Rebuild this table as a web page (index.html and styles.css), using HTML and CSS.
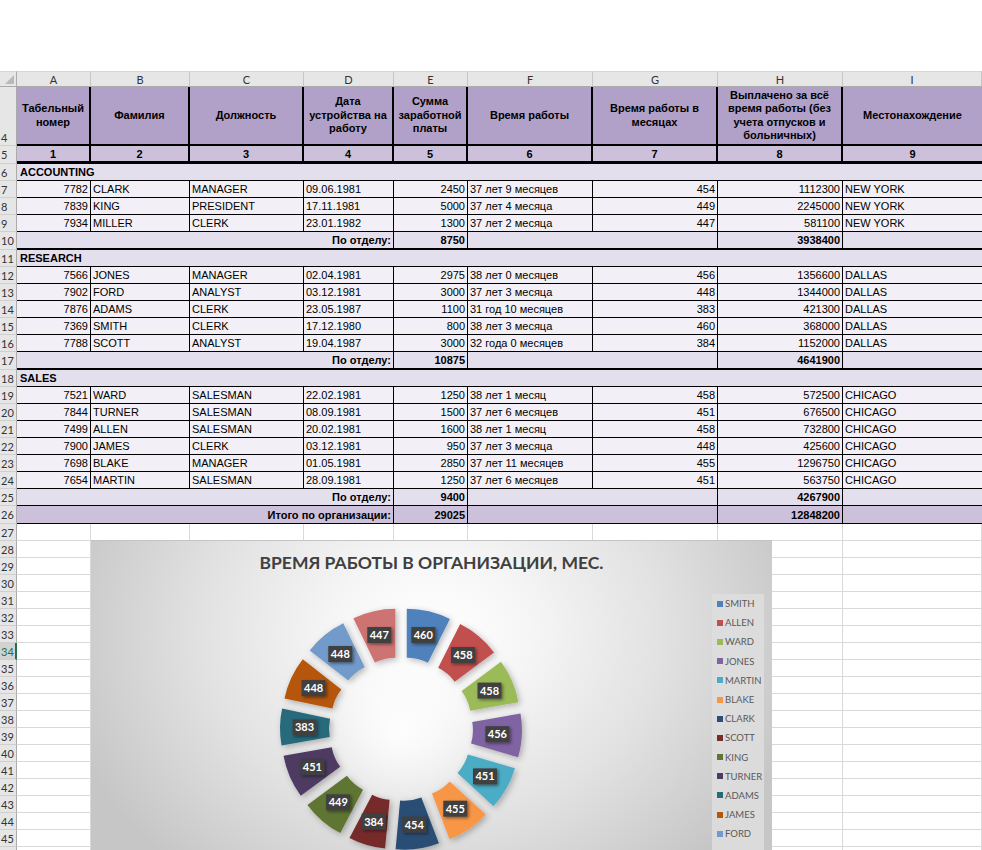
FILE: index.html
```html
<!DOCTYPE html>
<html lang="ru">
<head>
<meta charset="utf-8">
<title>Сотрудники</title>
<link rel="stylesheet" href="styles.css">
</head>
<body>
<div class="sheet">
  <div class="row colhead">
    <div class="corner"></div><div>A</div><div>B</div><div>C</div><div>D</div><div>E</div><div>F</div><div>G</div><div>H</div><div>I</div>
  </div>

  <div class="row r4">
    <div class="rh rb">4</div>
    <div class="th">Табельный<br>номер</div>
    <div class="th">Фамилия</div>
    <div class="th">Должность</div>
    <div class="th">Дата<br>устройства на<br>работу</div>
    <div class="th">Сумма<br>заработной<br>платы</div>
    <div class="th">Время работы</div>
    <div class="th">Время работы в<br>месяцах</div>
    <div class="th">Выплачено за всё<br>время работы (без<br>учета отпусков и<br>больничных)</div>
    <div class="th">Местонахождение</div>
  </div>

  <div class="row r5">
    <div class="rh">5</div>
    <div class="num">1</div><div class="num">2</div><div class="num">3</div><div class="num">4</div><div class="num">5</div><div class="num">6</div><div class="num">7</div><div class="num">8</div><div class="num">9</div>
  </div>

  <div class="row dept"><div class="rh">6</div><div class="dname">ACCOUNTING</div></div>
  <div class="row dr"><div class="rh">7</div><div class="c n">7782</div><div class="c">CLARK</div><div class="c">MANAGER</div><div class="c">09.06.1981</div><div class="c n">2450</div><div class="c">37 лет 9 месяцев</div><div class="c n">454</div><div class="c n">1112300</div><div class="c">NEW YORK</div></div>
  <div class="row dr"><div class="rh">8</div><div class="c n">7839</div><div class="c">KING</div><div class="c">PRESIDENT</div><div class="c">17.11.1981</div><div class="c n">5000</div><div class="c">37 лет 4 месяца</div><div class="c n">449</div><div class="c n">2245000</div><div class="c">NEW YORK</div></div>
  <div class="row dr"><div class="rh">9</div><div class="c n">7934</div><div class="c">MILLER</div><div class="c">CLERK</div><div class="c">23.01.1982</div><div class="c n">1300</div><div class="c">37 лет 2 месяца</div><div class="c n">447</div><div class="c n">581100</div><div class="c">NEW YORK</div></div>
  <div class="row tot thick h18"><div class="rh">10</div><div class="lab">По отделу:</div><div class="v">8750</div><div class="gap"></div><div class="v">3938400</div><div class="end"></div></div>

  <div class="row dept"><div class="rh">11</div><div class="dname">RESEARCH</div></div>
  <div class="row dr"><div class="rh">12</div><div class="c n">7566</div><div class="c">JONES</div><div class="c">MANAGER</div><div class="c">02.04.1981</div><div class="c n">2975</div><div class="c">38 лет 0 месяцев</div><div class="c n">456</div><div class="c n">1356600</div><div class="c">DALLAS</div></div>
  <div class="row dr"><div class="rh">13</div><div class="c n">7902</div><div class="c">FORD</div><div class="c">ANALYST</div><div class="c">03.12.1981</div><div class="c n">3000</div><div class="c">37 лет 3 месяца</div><div class="c n">448</div><div class="c n">1344000</div><div class="c">DALLAS</div></div>
  <div class="row dr"><div class="rh">14</div><div class="c n">7876</div><div class="c">ADAMS</div><div class="c">CLERK</div><div class="c">23.05.1987</div><div class="c n">1100</div><div class="c">31 год 10 месяцев</div><div class="c n">383</div><div class="c n">421300</div><div class="c">DALLAS</div></div>
  <div class="row dr"><div class="rh">15</div><div class="c n">7369</div><div class="c">SMITH</div><div class="c">CLERK</div><div class="c">17.12.1980</div><div class="c n">800</div><div class="c">38 лет 3 месяца</div><div class="c n">460</div><div class="c n">368000</div><div class="c">DALLAS</div></div>
  <div class="row dr"><div class="rh">16</div><div class="c n">7788</div><div class="c">SCOTT</div><div class="c">ANALYST</div><div class="c">19.04.1987</div><div class="c n">3000</div><div class="c">32 года 0 месяцев</div><div class="c n">384</div><div class="c n">1152000</div><div class="c">DALLAS</div></div>
  <div class="row tot thick h18"><div class="rh">17</div><div class="lab">По отделу:</div><div class="v">10875</div><div class="gap"></div><div class="v">4641900</div><div class="end"></div></div>

  <div class="row dept"><div class="rh">18</div><div class="dname">SALES</div></div>
  <div class="row dr"><div class="rh">19</div><div class="c n">7521</div><div class="c">WARD</div><div class="c">SALESMAN</div><div class="c">22.02.1981</div><div class="c n">1250</div><div class="c">38 лет 1 месяц</div><div class="c n">458</div><div class="c n">572500</div><div class="c">CHICAGO</div></div>
  <div class="row dr"><div class="rh">20</div><div class="c n">7844</div><div class="c">TURNER</div><div class="c">SALESMAN</div><div class="c">08.09.1981</div><div class="c n">1500</div><div class="c">37 лет 6 месяцев</div><div class="c n">451</div><div class="c n">676500</div><div class="c">CHICAGO</div></div>
  <div class="row dr"><div class="rh">21</div><div class="c n">7499</div><div class="c">ALLEN</div><div class="c">SALESMAN</div><div class="c">20.02.1981</div><div class="c n">1600</div><div class="c">38 лет 1 месяц</div><div class="c n">458</div><div class="c n">732800</div><div class="c">CHICAGO</div></div>
  <div class="row dr"><div class="rh">22</div><div class="c n">7900</div><div class="c">JAMES</div><div class="c">CLERK</div><div class="c">03.12.1981</div><div class="c n">950</div><div class="c">37 лет 3 месяца</div><div class="c n">448</div><div class="c n">425600</div><div class="c">CHICAGO</div></div>
  <div class="row dr"><div class="rh">23</div><div class="c n">7698</div><div class="c">BLAKE</div><div class="c">MANAGER</div><div class="c">01.05.1981</div><div class="c n">2850</div><div class="c">37 лет 11 месяцев</div><div class="c n">455</div><div class="c n">1296750</div><div class="c">CHICAGO</div></div>
  <div class="row dr"><div class="rh">24</div><div class="c n">7654</div><div class="c">MARTIN</div><div class="c">SALESMAN</div><div class="c">28.09.1981</div><div class="c n">1250</div><div class="c">37 лет 6 месяцев</div><div class="c n">451</div><div class="c n">563750</div><div class="c">CHICAGO</div></div>
  <div class="row tot"><div class="rh">25</div><div class="lab">По отделу:</div><div class="v">9400</div><div class="gap"></div><div class="v">4267900</div><div class="end"></div></div>
  <div class="row tot grand h18"><div class="rh">26</div><div class="lab">Итого по организации:</div><div class="v">29025</div><div class="gap"></div><div class="v">12848200</div><div class="end"></div></div>

  <div class="row blank"><div class="rh">27</div><span></span><span></span><span></span><span></span><span></span><span></span><span></span><span></span><span></span></div>
  <div class="row blank"><div class="rh">28</div><span></span><span></span><span></span><span></span><span></span><span></span><span></span><span></span><span></span></div>
  <div class="row blank"><div class="rh">29</div><span></span><span></span><span></span><span></span><span></span><span></span><span></span><span></span><span></span></div>
  <div class="row blank"><div class="rh">30</div><span></span><span></span><span></span><span></span><span></span><span></span><span></span><span></span><span></span></div>
  <div class="row blank"><div class="rh">31</div><span></span><span></span><span></span><span></span><span></span><span></span><span></span><span></span><span></span></div>
  <div class="row blank"><div class="rh">32</div><span></span><span></span><span></span><span></span><span></span><span></span><span></span><span></span><span></span></div>
  <div class="row blank"><div class="rh">33</div><span></span><span></span><span></span><span></span><span></span><span></span><span></span><span></span><span></span></div>
  <div class="row blank"><div class="rh sel">34</div><span></span><span></span><span></span><span></span><span></span><span></span><span></span><span></span><span></span></div>
  <div class="row blank"><div class="rh">35</div><span></span><span></span><span></span><span></span><span></span><span></span><span></span><span></span><span></span></div>
  <div class="row blank"><div class="rh">36</div><span></span><span></span><span></span><span></span><span></span><span></span><span></span><span></span><span></span></div>
  <div class="row blank"><div class="rh">37</div><span></span><span></span><span></span><span></span><span></span><span></span><span></span><span></span><span></span></div>
  <div class="row blank"><div class="rh">38</div><span></span><span></span><span></span><span></span><span></span><span></span><span></span><span></span><span></span></div>
  <div class="row blank"><div class="rh">39</div><span></span><span></span><span></span><span></span><span></span><span></span><span></span><span></span><span></span></div>
  <div class="row blank"><div class="rh">40</div><span></span><span></span><span></span><span></span><span></span><span></span><span></span><span></span><span></span></div>
  <div class="row blank"><div class="rh">41</div><span></span><span></span><span></span><span></span><span></span><span></span><span></span><span></span><span></span></div>
  <div class="row blank"><div class="rh">42</div><span></span><span></span><span></span><span></span><span></span><span></span><span></span><span></span><span></span></div>
  <div class="row blank"><div class="rh">43</div><span></span><span></span><span></span><span></span><span></span><span></span><span></span><span></span><span></span></div>
  <div class="row blank"><div class="rh">44</div><span></span><span></span><span></span><span></span><span></span><span></span><span></span><span></span><span></span></div>
  <div class="row blank"><div class="rh">45</div><span></span><span></span><span></span><span></span><span></span><span></span><span></span><span></span><span></span></div>
  <div class="row blank"><div class="rh"></div><span></span><span></span><span></span><span></span><span></span><span></span><span></span><span></span><span></span></div>

  <div class="chart">
    <div class="chart-title">ВРЕМЯ РАБОТЫ В ОРГАНИЗАЦИИ, МЕС.</div>
    <svg class="donut" width="681" height="330" viewBox="0 0 681 330">
      <defs>
        <filter id="segshadow" x="-20%" y="-20%" width="140%" height="140%">
          <feDropShadow dx="2" dy="2" stdDeviation="3" flood-color="#000" flood-opacity="0.28"/>
        </filter>
        <filter id="lblshadow" x="-30%" y="-30%" width="160%" height="160%">
          <feDropShadow dx="1.5" dy="1.5" stdDeviation="1.5" flood-color="#000" flood-opacity="0.45"/>
        </filter>
        <radialGradient id="hole" cx="0.5" cy="0.5" r="0.5">
          <stop offset="0" stop-color="#ffffff" stop-opacity="0.9"/>
          <stop offset="1" stop-color="#ffffff" stop-opacity="0"/>
        </radialGradient>
      </defs>
      <circle cx="310" cy="188" r="80" fill="url(#hole)"/>
      <g id="segs" filter="url(#segshadow)"></g>
      <g id="labels"></g>
    </svg>
    <div class="legend">
      <div class="item"><span class="sw k1"></span>SMITH</div>
      <div class="item"><span class="sw k2"></span>ALLEN</div>
      <div class="item"><span class="sw k3"></span>WARD</div>
      <div class="item"><span class="sw k4"></span>JONES</div>
      <div class="item"><span class="sw k5"></span>MARTIN</div>
      <div class="item"><span class="sw k6"></span>BLAKE</div>
      <div class="item"><span class="sw k7"></span>CLARK</div>
      <div class="item"><span class="sw k8"></span>SCOTT</div>
      <div class="item"><span class="sw k9"></span>KING</div>
      <div class="item"><span class="sw k10"></span>TURNER</div>
      <div class="item"><span class="sw k11"></span>ADAMS</div>
      <div class="item"><span class="sw k12"></span>JAMES</div>
      <div class="item"><span class="sw k13"></span>FORD</div>
    </div>
  </div>
</div>
<script src="script.js"></script>
</body>
</html>
```

FILE: styles.css
```css
* { box-sizing: border-box; }
html, body { margin: 0; padding: 0; overflow: hidden; background: #fff; }
body {
  font-family: "Liberation Sans", Arial, sans-serif;
  font-size: 11px;
  color: #000;
}

.sheet { position: relative; margin-top: 71px; width: 982px; }

.row {
  display: grid;
  grid-template-columns: 17px 74px 99px 114px 90px 74px 125px 125px 125px 139px;
  height: 17px;
}
.row > * {
  min-width: 0;
  overflow: hidden;
  white-space: nowrap;
  display: flex;
  align-items: center;
}
.h18 { height: 18px; }

/* column header */
.colhead { height: 16px; }
.colhead > div {
  background: #e6e6e6;
  border-right: 1px solid #c6c6c6;
  border-bottom: 1px solid #ababab;
  border-top: 1px solid #d6d6d6;
  justify-content: center;
  font-family: Lato, "Open Sans", sans-serif;
  font-size: 11px;
  color: #333;
}
.colhead > .corner { position: relative; border-right-color: #ababab; }
.corner::after {
  content: "";
  position: absolute;
  right: 2px;
  bottom: 2px;
  border-style: solid;
  border-width: 0 0 9px 9px;
  border-color: transparent transparent #b9b9b9 transparent;
}

/* row header */
.rh {
  background: #e6e6e6;
  border-right: 1px solid #ababab;
  border-bottom: 1px solid #cfcfcf;
  font-family: Lato, "Open Sans", sans-serif;
  font-size: 11px;
  color: #333;
  padding-left: 1px;
}
.rh.rb { align-items: flex-end; padding-bottom: 1px; }
.rh.sel {
  background: #d2d2d2;
  color: #217346;
  border-right: 2px solid #217346;
}

/* header rows */
.r4 { height: 59px; }
.th {
  background: #b1a0c7;
  border-right: 2px solid #000;
  border-bottom: 2px solid #000;
  justify-content: center;
  text-align: center;
  white-space: normal !important;
  font-weight: bold;
  line-height: 13.4px;
}
.r5 { height: 18px; }
.num {
  background: #ccc0da;
  border-right: 2px solid #000;
  border-bottom: 3px solid #000;
  justify-content: center;
  font-weight: bold;
}
.th:last-child, .num:last-child { border-right: none; }

/* department row */
.dname {
  grid-column: 2 / -1;
  background: #e4dfec;
  border-bottom: 1px solid #000;
  font-weight: bold;
  padding-left: 3px;
}

/* data rows */
.c {
  background: #f2f0f6;
  border-right: 1px solid #000;
  border-bottom: 1px solid #000;
  padding: 0 2px;
}
.c.n { justify-content: flex-end; }
.c:last-child { border-right: none; }

/* totals */
.tot > div:not(.rh) {
  background: #e4dfec;
  border-right: 1px solid #000;
  border-bottom: 1px solid #000;
  font-weight: bold;
  justify-content: flex-end;
  padding: 0 2px;
}
.tot > .lab { grid-column: 2 / 6; }
.tot > .gap { grid-column: 7 / 9; }
.tot > .end { border-right: none !important; }
.tot.thick > div:not(.rh) { border-bottom-width: 2px; }
.tot.grand > div:not(.rh) { background: #ccc0da; }

/* empty grid */
.blank > span {
  background: #fff;
  border-right: 1px solid #d9d9d9;
  border-bottom: 1px solid #d9d9d9;
}

/* chart object floating over the grid */
.chart {
  position: absolute;
  left: 91px;
  top: 469px;
  width: 681px;
  height: 330px;
  border-top: 1px solid #c4c4c4;
  background: radial-gradient(ellipse 56% 95% at 50% 28%, #ffffff 0%, #f6f6f6 25%, #e2e2e2 60%, #c6c6c6 100%);
  overflow: hidden;
}
.chart-title {
  text-align: center;
  font-family: Lato, "Open Sans", sans-serif;
  font-weight: bold;
  font-size: 17.5px;
  line-height: 22px;
  color: #404040;
  padding-top: 11px;
}
.donut { position: absolute; left: 0; top: 0; }
.donut text {
  font-family: Lato, "Open Sans", sans-serif;
  font-weight: bold;
  font-size: 11px;
  fill: #fff;
}

.legend {
  position: absolute;
  left: 621px;
  top: 53px;
  width: 52px;
  height: 290px;
  background: rgba(222, 222, 222, 0.85);
  padding-left: 5px;
}
.item {
  height: 19.2px;
  display: flex;
  align-items: center;
  font-family: Lato, "Open Sans", sans-serif;
  font-size: 9.5px;
  color: #595959;
  white-space: nowrap;
}
.sw { width: 6px; height: 6px; margin-right: 2px; flex: none; }
.k1 { background: #4f81bd; }
.k2 { background: #c0504d; }
.k3 { background: #9bbb59; }
.k4 { background: #8064a2; }
.k5 { background: #4bacc6; }
.k6 { background: #f79646; }
.k7 { background: #2c4d75; }
.k8 { background: #772c2a; }
.k9 { background: #5f7530; }
.k10 { background: #4d3b62; }
.k11 { background: #276a7c; }
.k12 { background: #b65708; }
.k13 { background: #729aca; }
```

FILE: script.js
```js
(function () {
  var data = [
    ["SMITH", 460, "#4f81bd"], ["ALLEN", 458, "#c0504d"], ["WARD", 458, "#9bbb59"],
    ["JONES", 456, "#8064a2"], ["MARTIN", 451, "#4bacc6"], ["BLAKE", 455, "#f79646"],
    ["CLARK", 454, "#2c4d75"], ["SCOTT", 384, "#772c2a"], ["KING", 449, "#5f7530"],
    ["TURNER", 451, "#4d3b62"], ["ADAMS", 383, "#276a7c"], ["JAMES", 448, "#b65708"],
    ["FORD", 448, "#729aca"], ["MILLER", 447, "#cd7371"]
  ];
  var NS = "http://www.w3.org/2000/svg";
  var segs = document.getElementById("segs");
  var labels = document.getElementById("labels");
  var total = data.reduce(function (s, d) { return s + d[1]; }, 0);
  var cx = 310, cy = 188, r0 = 47, r1 = 96, ex = 25, a = 0;
  function pt(ox, oy, r, ang) {
    return (ox + r * Math.sin(ang)).toFixed(2) + " " + (oy - r * Math.cos(ang)).toFixed(2);
  }
  data.forEach(function (d) {
    var span = d[1] / total * 2 * Math.PI;
    var a0 = a, a1 = a + span, m = (a0 + a1) / 2;
    a = a1;
    var ox = cx + ex * Math.sin(m), oy = cy - ex * Math.cos(m);
    var p = document.createElementNS(NS, "path");
    p.setAttribute("d",
      "M" + pt(ox, oy, r1, a0) +
      " A" + r1 + " " + r1 + " 0 0 1 " + pt(ox, oy, r1, a1) +
      " L" + pt(ox, oy, r0, a1) +
      " A" + r0 + " " + r0 + " 0 0 0 " + pt(ox, oy, r0, a0) + " Z");
    p.setAttribute("fill", d[2]);
    segs.appendChild(p);

    var lr = (r0 + r1) / 2 + ex;
    var lx = cx + lr * Math.sin(m), ly = cy - lr * Math.cos(m);
    var g = document.createElementNS(NS, "g");
    var r = document.createElementNS(NS, "rect");
    r.setAttribute("x", (lx - 12).toFixed(1));
    r.setAttribute("y", (ly - 8).toFixed(1));
    r.setAttribute("width", "24");
    r.setAttribute("height", "16");
    r.setAttribute("fill", "#404040");
    r.setAttribute("filter", "url(#lblshadow)");
    var t = document.createElementNS(NS, "text");
    t.setAttribute("x", lx.toFixed(1));
    t.setAttribute("y", (ly + 4).toFixed(1));
    t.setAttribute("text-anchor", "middle");
    t.textContent = String(d[1]);
    g.appendChild(r);
    g.appendChild(t);
    labels.appendChild(g);
  });
})();
```
